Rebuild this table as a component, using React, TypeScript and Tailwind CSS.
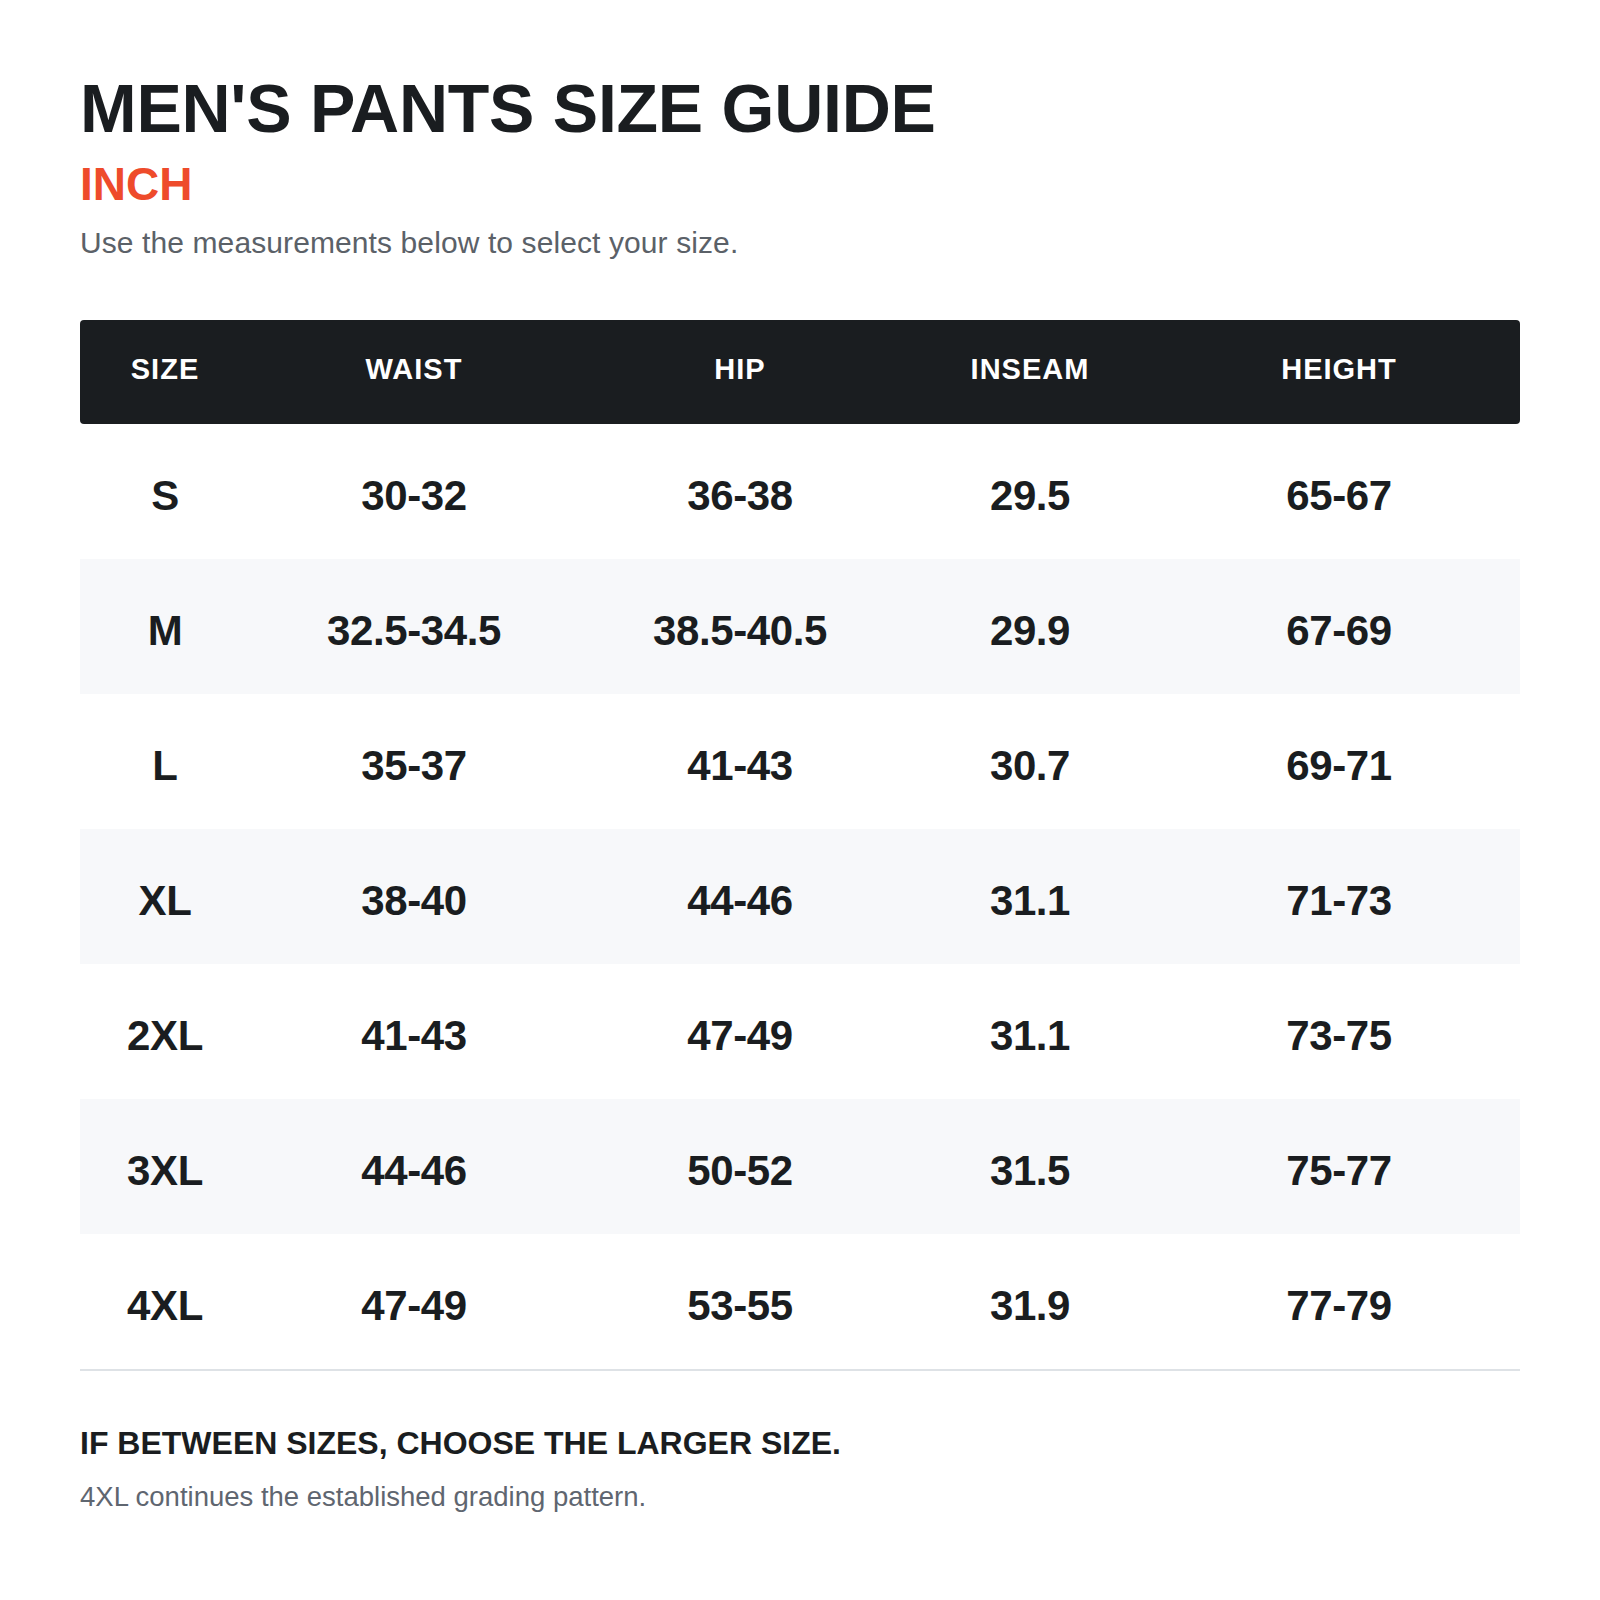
const headers = ["SIZE", "WAIST", "HIP", "INSEAM", "HEIGHT"]

const rows = [
  ["S", "30-32", "36-38", "29.5", "65-67"],
  ["M", "32.5-34.5", "38.5-40.5", "29.9", "67-69"],
  ["L", "35-37", "41-43", "30.7", "69-71"],
  ["XL", "38-40", "44-46", "31.1", "71-73"],
  ["2XL", "41-43", "47-49", "31.1", "73-75"],
  ["3XL", "44-46", "50-52", "31.5", "75-77"],
  ["4XL", "47-49", "53-55", "31.9", "77-79"],
]

export default function App() {
  return (
    <div className="min-h-screen bg-white font-['Liberation_Sans',Arial,sans-serif] text-[#1a1d20]">
      <div className="px-[80px] pt-[74px] pb-[80px]">
        {/* ================= HEADING ================= */}
        <h1 className="text-[68px] leading-none font-bold tracking-[-0.25px]">
          MEN'S PANTS SIZE GUIDE
        </h1>
        <h2 className="mt-[19px] text-[46px] leading-none font-bold text-[#ee4b2b]">
          INCH
        </h2>
        <p className="mt-[21px] text-[30px] leading-none tracking-[0.1px] text-[#5b6168]">
          Use the measurements below to select your size.
        </p>

        {/* ================= TABLE ================= */}
        <div className="mt-[62px] border-b-2 border-[#dee2e6]">
          <div className="grid grid-cols-[170px_328px_324px_256px_362px] h-[104px] items-center pb-[6px] bg-[#1a1d20] rounded-[4px]">
            {headers.map(h => (
              <div
                key={h}
                className="text-center text-white text-[29px] leading-none font-bold tracking-[1px]"
              >
                {h}
              </div>
            ))}
          </div>

          {rows.map((row, i) => (
            <div
              key={row[0]}
              className={`grid grid-cols-[170px_328px_324px_256px_362px] h-[135px] items-center pt-[8px] ${
                i % 2 === 1 ? "bg-[#f7f8fa]" : "bg-white"
              }`}
            >
              {row.map((cell, j) => (
                <div
                  key={j}
                  className="text-center text-[42px] leading-none font-bold tracking-[-0.4px]"
                >
                  {cell}
                </div>
              ))}
            </div>
          ))}
        </div>

        {/* ================= NOTE ================= */}
        <p className="mt-[56px] text-[32px] leading-none font-bold">
          IF BETWEEN SIZES, CHOOSE THE LARGER SIZE.
        </p>
        <p className="mt-[24px] text-[27.5px] leading-none text-[#5f6670]">
          4XL continues the established grading pattern.
        </p>
      </div>
    </div>
  )
}
